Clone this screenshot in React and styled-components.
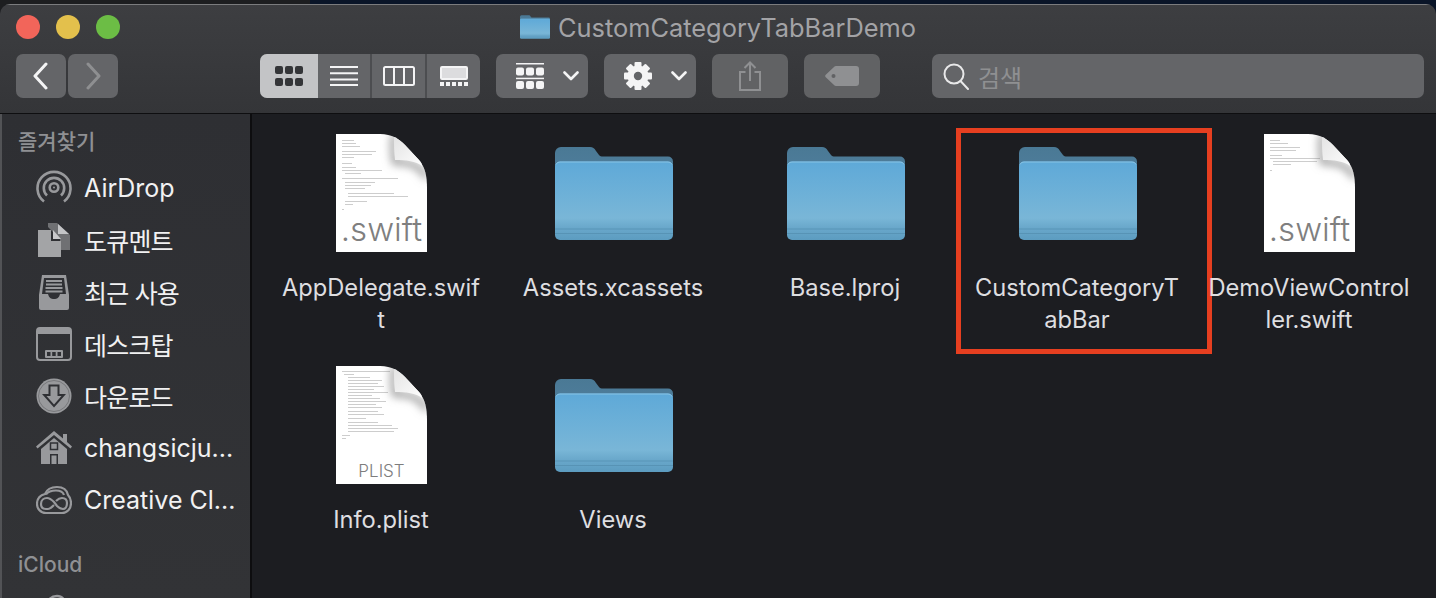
import React from "react";
import styled, { createGlobalStyle } from "styled-components";

const FONT = `Inter, "Noto Sans CJK KR", sans-serif`;

const GlobalStyle = createGlobalStyle`
  html, body {
    margin: 0;
    padding: 0;
    background: #1c1d21;
    font-family: ${FONT};
  }
`;

const Desktop = styled.div`
  width: 1436px;
  height: 598px;
  padding-top: 4px;
  box-sizing: border-box;
  overflow: hidden;
  background: linear-gradient(to right, #1d1e20 310px, #0a1528 310px);
`;

const Window = styled.div`
  height: 594px;
  display: flex;
  flex-direction: column;
  border-radius: 10px 10px 0 0;
  overflow: hidden;
  background: #1c1d21;
`;

const Toolbar = styled.header`
  flex: none;
  height: 110px;
  box-sizing: border-box;
  padding: 0 12px 0 16px;
  background: linear-gradient(#3d3e41, #343538);
  border-top: 1px solid #7b7c7e;
  border-bottom: 1px solid #0e0e10;
`;

const TitleRow = styled.div`
  height: 44px;
  margin: 0 4px 5px 0;
  display: grid;
  grid-template-columns: 1fr auto 1fr;
  align-items: center;
`;

const Lights = styled.div`
  display: flex;
  gap: 16px;
`;

const Light = styled.span`
  width: 24px;
  height: 24px;
  border-radius: 50%;
  background: ${(p) => p.$color};
`;

const Title = styled.div`
  display: flex;
  align-items: center;
  gap: 8px;
  font-size: 25.4px;
  color: #a3a3a6;
`;

const ToolRow = styled.div`
  display: flex;
  align-items: stretch;
  height: 44px;
`;

const NavGroup = styled.div`
  display: flex;
  gap: 2px;
  margin-right: 142px;
`;

const ToolButton = styled.div`
  width: ${(p) => p.$width}px;
  margin-right: ${(p) => p.$after || 0}px;
  box-sizing: border-box;
  padding-left: ${(p) => p.$inset || 0}px;
  display: flex;
  align-items: center;
  justify-content: ${(p) => (p.$inset ? "flex-start" : "center")};
  gap: ${(p) => p.$gap || 0}px;
  border-radius: 7px;
  background: ${(p) => (p.$dim ? "#616264" : "#646568")};
`;

const ViewGroup = styled.div`
  display: flex;
  margin-right: 16px;
  border-radius: 7px;
  overflow: hidden;
  background: #646568;
`;

const ViewCell = styled.div`
  width: ${(p) => p.$width}px;
  display: flex;
  align-items: center;
  justify-content: center;
  box-sizing: border-box;
  border-left: ${(p) => (p.$divided ? "2px solid #4c4d50" : "none")};
  background: ${(p) => (p.$active ? "#c3c4c6" : "transparent")};
`;

const SearchBox = styled.div`
  flex: 1;
  display: flex;
  align-items: center;
  gap: 9px;
  padding-left: 11px;
  margin-left: 52px;
  border-radius: 7px;
  background: #646568;
  color: #8f9092;
  font-size: 24px;
`;

const Body = styled.div`
  flex: 1;
  min-height: 0;
  display: flex;
`;

const Sidebar = styled.aside`
  flex: none;
  width: 252px;
  box-sizing: border-box;
  padding-top: 13px;
  overflow: hidden;
  background: linear-gradient(#2e2f33, #323336);
  border-left: 2px solid #525356;
  border-right: 2px solid #0d0d0f;
`;

const SectionLabel = styled.div`
  height: 30px;
  line-height: 30px;
  margin: ${(p) => p.$top || 0}px 0 5px 16px;
  font-size: 21px;
  font-weight: 500;
  color: #8f9093;
`;

const SideRow = styled.div`
  height: 52px;
  display: flex;
  align-items: center;
  padding-left: 34px;
  gap: 12px;
  color: #f1f1f2;
  font-size: 25px;
  letter-spacing: ${(p) => (p.$korean ? "-0.8px" : "0")};
  white-space: nowrap;
`;

const SideIcon = styled.svg`
  flex: none;
  width: 36px;
  height: 36px;
  color: #98999c;
`;

const Grid = styled.main`
  flex: 1;
  box-sizing: border-box;
  padding: 20px 0 0 13px;
  display: grid;
  grid-template-columns: repeat(5, 232px);
  grid-auto-rows: 232px;
`;

const Item = styled.div`
  position: relative;
  display: flex;
  flex-direction: column;
  align-items: center;
`;

const IconBox = styled.div`
  height: 118px;
  display: flex;
  align-items: center;
  justify-content: center;
  margin-bottom: 20px;
  padding-left: ${(p) => (p.$folder ? 2 : 0)}px;
`;

const Label = styled.div`
  font-size: 23.7px;
  line-height: 32px;
  color: #dedee0;
  text-align: center;
  white-space: nowrap;
`;

const SelectionFrame = styled.div`
  position: absolute;
  left: -5px;
  top: -6px;
  width: 256px;
  height: 226px;
  box-sizing: border-box;
  border: 5px solid #e63f20;
`;

const FolderIcon = ({ width = 118, height = 93 }) => (
  <svg width={width} height={height} viewBox="0 0 118 93">
    <defs>
      <linearGradient id="folderFront" x1="0" y1="0" x2="0" y2="1">
        <stop offset="0" stopColor="#5ea9d8" />
        <stop offset="0.72" stopColor="#79b6d7" />
        <stop offset="0.84" stopColor="#6aa8cb" />
        <stop offset="1" stopColor="#5c9cc0" />
      </linearGradient>
      <linearGradient id="folderBack" x1="0" y1="0" x2="0" y2="1">
        <stop offset="0" stopColor="#4a7995" />
        <stop offset="1" stopColor="#517f9e" />
      </linearGradient>
    </defs>
    <path
      d="M0 6a6 6 0 0 1 6-6h29c3 0 4 1 6 4l3 4c1 1 2 1.500 4 1.500h65a5 5 0 0 1 5 5V40H0Z"
      fill="url(#folderBack)"
    />
    <rect y="14.500" width="118" height="78.500" rx="5" fill="url(#folderFront)" />
    <path d="M1 17.500a4 4 0 0 1 4-2.500h108a4 4 0 0 1 4 2.500" fill="none" stroke="#88c3e4" />
    <path d="M0 82h118M0 86.500h118" stroke="#5590b2" strokeWidth="1" opacity="0.8" />
  </svg>
);

const CODE_LINES = {
  app: [
    [6, 6, 12], [6, 9, 14], [6, 12, 18], [6, 17, 34], [6, 20, 30], [6, 23, 12], [6, 29, 10], [6, 33, 14],
    [6, 36, 40], [9, 39, 16], [6, 44, 56], [9, 48, 30], [9, 51, 26], [9, 54, 20], [12, 59, 46],
    [12, 62, 60], [9, 67, 22], [9, 70, 8], [6, 75, 2],
  ],
  plist: [
    [6, 5, 48], [8, 8, 10], [12, 11, 22], [12, 14, 34], [12, 17, 30], [12, 20, 36], [12, 23, 26], [12, 26, 40],
    [12, 29, 24], [12, 32, 32], [12, 35, 38], [12, 38, 28], [12, 41, 34], [12, 45, 30], [12, 48, 36],
    [12, 52, 18], [12, 56, 30], [12, 59, 44], [12, 62, 50], [12, 65, 46], [6, 69, 8], [6, 72, 4],
  ],
  demo: [
    [6, 6, 10], [6, 9, 18], [6, 13, 30], [6, 16, 26], [6, 21, 12], [6, 24, 50], [9, 27, 44], [9, 30, 18],
    [6, 36, 2],
  ],
};

const PAGE_OUTLINE = "M0 0H44C56 0 63 5 69 11L83 26C89 33 91 42 91 54V118H0Z";

const FileIcon = ({ ext, lines, small }) => (
  <svg width="91" height="118" viewBox="0 0 91 118">
    <defs>
      <clipPath id="pageClip">
        <path d={PAGE_OUTLINE} />
      </clipPath>
      <filter id="curlBlur" x="-50%" y="-50%" width="200%" height="200%">
        <feGaussianBlur stdDeviation="4" />
      </filter>
      <linearGradient id="flapShade" x1="0" y1="0" x2="1" y2="1">
        <stop offset="0" stopColor="#e4e4e4" />
        <stop offset="1" stopColor="#fdfdfd" />
      </linearGradient>
    </defs>
    <path d={PAGE_OUTLINE} fill="#fff" />
    <g clipPath="url(#pageClip)">
      <path d="M58 0C57 12 57 20 59 28C68 28 82 28 91 44" fill="none" stroke="#9a9a9a" strokeWidth="6" filter="url(#curlBlur)" />
    </g>
    <path d="M58 3C61 4 65 7 69 11L83 26C85 28 86 30 86 32C80 27 70 26 59 26C58 18 58 10 58 3Z" fill="url(#flapShade)" />
    {lines.map(([x, y, w]) => (
      <rect key={`${x}-${y}`} x={x} y={y} width={w} height="0.600" fill="#777" opacity="0.6" />
    ))}
    {small ? (
      <text x="45.500" y="111" textAnchor="middle" fontFamily="Inter, sans-serif" fontWeight="300" fontSize="17" fill="#7d7d7d">
        {ext}
      </text>
    ) : (
      <text x="45.500" y="107" textAnchor="middle" fontFamily="Inter, sans-serif" fontWeight="300" fontSize="33" fill="#7f7f7f">
        {ext}
      </text>
    )}
  </svg>
);

const ITEMS = [
  { name: ["AppDelegate.swif", "t"], kind: "file", ext: ".swift", lines: CODE_LINES.app },
  { name: ["Assets.xcassets"], kind: "folder" },
  { name: ["Base.lproj"], kind: "folder" },
  { name: ["CustomCategoryT", "abBar"], kind: "folder", selected: true },
  { name: ["DemoViewControl", "ler.swift"], kind: "file", ext: ".swift", lines: CODE_LINES.demo },
  { name: ["Info.plist"], kind: "file", ext: "PLIST", small: true, lines: CODE_LINES.plist },
  { name: ["Views"], kind: "folder" },
];

const AirDropIcon = () => (
  <SideIcon viewBox="0 0 36 36" fill="none" stroke="currentColor" strokeWidth="2.600">
    <path d="M8 31.500A16.500 16.500 0 1 1 28 31.500" />
    <path d="M11 25.500A10.200 10.200 0 1 1 25 25.500" />
    <circle cx="18" cy="17.500" r="4.300" />
    <circle cx="18" cy="17.500" r="1" fill="currentColor" stroke="none" />
  </SideIcon>
);

const DocumentsIcon = () => (
  <SideIcon viewBox="0 0 36 36">
    <path d="M12 1h9l13 12v15H24V17L12 5Z" fill="#6f7073" />
    <path d="M2 8h13v11h10v16H2Z" fill="#a3a4a6" />
    <path d="M17 8l8 9h-8Z" fill="#c9c9cb" />
    <path d="M22 2l11 10H22Z" fill="#c3c4c6" />
  </SideIcon>
);

const RecentsIcon = () => (
  <SideIcon viewBox="0 0 36 36">
    <path d="M6 1h24l3 20v13a2 2 0 0 1-2 2H5a2 2 0 0 1-2-2V21Z" fill="#98999c" />
    <path d="M8 4h20l2 16h-6c-1 4-3 5-6 5s-5-1-6-5H6Z" fill="#2f3034" />
    <path d="M10 7h16M10 10.500h16M9.500 14h17M9.500 17.500h17" stroke="#98999c" strokeWidth="2" />
  </SideIcon>
);

const DesktopIcon = () => (
  <SideIcon viewBox="0 0 36 36" fill="none">
    <rect x="1" y="2" width="34" height="32" rx="3" stroke="currentColor" strokeWidth="2" />
    <rect x="2" y="3" width="32" height="5" fill="currentColor" />
    <rect x="9" y="24" width="18" height="8" rx="1" fill="currentColor" />
    <rect x="11" y="26" width="3.500" height="4" fill="#2f3034" />
    <rect x="16.200" y="26" width="3.500" height="4" fill="#2f3034" />
    <rect x="21.500" y="26" width="3.500" height="4" fill="#2f3034" />
  </SideIcon>
);

const DownloadsIcon = () => (
  <SideIcon viewBox="0 0 36 36">
    <circle cx="18" cy="18" r="17.500" fill="#98999c" />
    <circle cx="18" cy="18" r="15.500" fill="none" stroke="#77787b" strokeWidth="1" />
    <path d="M12.500 6.500h11V16h6.500L18 29.500 6 16h6.500Z" fill="#2f3034" />
    <path d="M14.500 8.500h7V18h4L18 26.500 10.500 18h4Z" fill="#98999c" />
  </SideIcon>
);

const HomeIcon = () => (
  <SideIcon viewBox="0 0 36 36">
    <path d="M18 1 27 8.500V4h4v8l5 4.500-1.500 2L18 5 1.500 18.500 0 16.500Z" fill="currentColor" />
    <path d="M18 8 31 19V34H5V19Z" fill="currentColor" />
    <rect x="14.500" y="13" width="7" height="6.500" fill="none" stroke="#2f3034" strokeWidth="1.500" />
    <rect x="14" y="24" width="8" height="10" fill="#2f3034" />
    <rect x="15.500" y="25.500" width="5" height="8.500" fill="currentColor" />
  </SideIcon>
);

const CreativeCloudIcon = () => (
  <SideIcon viewBox="0 0 36 36" fill="none" stroke="currentColor" strokeWidth="2.200">
    <path d="M10 31C4 31 1 26 1 22 1 16 5 13 9 12 11 7 16 5 21 5 27 5 31 8 32 13 34 15 35 18 35 21 35 27 31 31 26 31Z" />
    <path d="M10 27C7 27 5 25 5 22 5 18 8 16 11 16 14 16 16 18 18 20L21 24C23 26 25 27 27 27 29 27 31 25 31 21 31 18 29 16 26 16 24 16 22 17 20 19" />
    <path d="M10 12.500C12 9.500 16 8.500 20 8.500 24 8.500 27 10 28 13M10 27H12C14 27 16 25 18 23" />
  </SideIcon>
);

const CloudDriveIcon = () => (
  <SideIcon viewBox="0 0 36 36">
    <path d="M6 34C2 34 0 30 0 27 0 23 3 20 7 20 8 10 14 3 21 3 27 3 31 9 31 16 34 18 36 22 36 26 36 30 33 34 29 34Z" fill="none" stroke="currentColor" strokeWidth="2.400" />
  </SideIcon>
);

const SIDE_ITEMS = [
  { label: "AirDrop", Icon: AirDropIcon },
  { label: "도큐멘트", Icon: DocumentsIcon, korean: true },
  { label: "최근 사용", Icon: RecentsIcon, korean: true },
  { label: "데스크탑", Icon: DesktopIcon, korean: true },
  { label: "다운로드", Icon: DownloadsIcon, korean: true },
  { label: "changsicju...", Icon: HomeIcon },
  { label: "Creative Cl...", Icon: CreativeCloudIcon },
];

const Chevron = ({ dir, color }) => (
  <svg width="18" height="28" viewBox="0 0 18 28" fill="none" stroke={color} strokeWidth="3" strokeLinecap="round" strokeLinejoin="round">
    <path d={dir === "left" ? "M14 2 3 14l11 12" : "M4 2l11 12L4 26"} />
  </svg>
);

const SmallChevron = () => (
  <svg width="16" height="10" viewBox="0 0 16 10" fill="none" stroke="#f4f4f5" strokeWidth="2.600" strokeLinecap="round" strokeLinejoin="round">
    <path d="M1.500 1.500 8 8l6.500-6.500" />
  </svg>
);

const GridViewIcon = () => (
  <svg width="28" height="20" viewBox="0 0 28 20" fill="#343538">
    {[0, 10, 20].flatMap((x) =>
      [0, 12].map((y) => <rect key={`${x}-${y}`} x={x} y={y} width="8" height="8" rx="2" />)
    )}
  </svg>
);

const ListViewIcon = () => (
  <svg width="28" height="20" viewBox="0 0 28 20" stroke="#f4f4f5" strokeWidth="2">
    <path d="M0 1h28M0 7.300h28M0 13.600h28M0 19h28" />
  </svg>
);

const ColumnViewIcon = () => (
  <svg width="32" height="20" viewBox="0 0 32 20" fill="none" stroke="#f4f4f5" strokeWidth="2">
    <rect x="1" y="1" width="30" height="18" rx="1.500" />
    <path d="M11 1v18M21 1v18" />
  </svg>
);

const GalleryViewIcon = () => (
  <svg width="28" height="20" viewBox="0 0 28 20">
    <rect x="1" y="1" width="26" height="12" rx="1" fill="#dcdcde" stroke="#f4f4f5" strokeWidth="2" />
    {[0, 6, 12, 18, 24].map((x) => (
      <rect key={x} x={x} y="16" width="4" height="4" fill="#f4f4f5" />
    ))}
  </svg>
);

const ArrangeIcon = () => (
  <svg width="28" height="26" viewBox="0 0 28 26" fill="#f4f4f5">
    <rect width="28" height="1.500" />
    {[0, 10, 20].map((x) => (
      <React.Fragment key={x}>
        <rect x={x} y="4.500" width="8" height="8" rx="2" />
        <rect x={x} y="18" width="8" height="8" rx="2" />
      </React.Fragment>
    ))}
    <rect y="14.700" width="28" height="1.500" />
  </svg>
);

const GearIcon = () => (
  <svg width="28" height="28" viewBox="0 0 28 28">
    <g fill="#f4f4f5">
      {[0, 45, 90, 135, 180, 225, 270, 315].map((a) => (
        <rect key={a} x="10.500" y="0" width="7" height="8" rx="1" transform={`rotate(${a} 14 14)`} />
      ))}
      <circle cx="14" cy="14" r="10.500" />
    </g>
    <circle cx="14" cy="14" r="4.200" fill="#646568" />
  </svg>
);

const ShareIcon = () => (
  <svg width="24" height="30" viewBox="0 0 24 30" fill="none" stroke="#8f9092" strokeWidth="2">
    <path d="M7.500 11H2v18h20V11h-5.500" />
    <path d="M12 20V2M6.500 7 12 1.500 17.500 7" />
  </svg>
);

const TagIcon = () => (
  <svg width="34" height="20" viewBox="0 0 34 20">
    <path d="M11 0h20a3 3 0 0 1 3 3v14a3 3 0 0 1-3 3H11a3 3 0 0 1-2-1L1 11.500a2 2 0 0 1 0-3L9 1a3 3 0 0 1 2-1Z" fill="#8f9092" />
    <circle cx="8.500" cy="10" r="2" fill="#616264" />
  </svg>
);

const SearchIcon = () => (
  <svg width="26" height="28" viewBox="0 0 26 28" fill="none" stroke="#e8e8e9" strokeWidth="2">
    <circle cx="11" cy="12" r="9.500" />
    <path d="M17.500 19 25 27" strokeLinecap="round" />
  </svg>
);

const App = () => (
  <Desktop>
    <GlobalStyle />
    <Window>
      <Toolbar>
        <TitleRow>
          <Lights>
            <Light $color="#f2655a" />
            <Light $color="#e3c04c" />
            <Light $color="#6cbd45" />
          </Lights>
          <Title>
            <FolderIcon width={30} height={24} />
            CustomCategoryTabBarDemo
          </Title>
        </TitleRow>
        <ToolRow>
          <NavGroup>
            <ToolButton $width={50}>
              <Chevron dir="left" color="#f4f4f5" />
            </ToolButton>
            <ToolButton $width={50}>
              <Chevron dir="right" color="#8e8f91" />
            </ToolButton>
          </NavGroup>
          <ViewGroup>
            <ViewCell $width={58} $active>
              <GridViewIcon />
            </ViewCell>
            <ViewCell $width={52}>
              <ListViewIcon />
            </ViewCell>
            <ViewCell $width={55} $divided>
              <ColumnViewIcon />
            </ViewCell>
            <ViewCell $width={55} $divided>
              <GalleryViewIcon />
            </ViewCell>
          </ViewGroup>
          <ToolButton $width={92} $after={16} $inset={20} $gap={19}>
            <ArrangeIcon />
            <SmallChevron />
          </ToolButton>
          <ToolButton $width={92} $after={16} $inset={20} $gap={19}>
            <GearIcon />
            <SmallChevron />
          </ToolButton>
          <ToolButton $width={76} $after={16} $dim>
            <ShareIcon />
          </ToolButton>
          <ToolButton $width={76} $dim>
            <TagIcon />
          </ToolButton>
          <SearchBox>
            <SearchIcon />
            검색
          </SearchBox>
        </ToolRow>
      </Toolbar>
      <Body>
        <Sidebar>
          <SectionLabel>즐겨찾기</SectionLabel>
          {SIDE_ITEMS.map(({ label, Icon, korean }) => (
            <SideRow key={label} $korean={korean}>
              <Icon />
              {label}
            </SideRow>
          ))}
          <SectionLabel $top={24}>iCloud</SectionLabel>
          <SideRow>
            <CloudDriveIcon />
          </SideRow>
        </Sidebar>
        <Grid>
          {ITEMS.map((item) => (
            <Item key={item.name.join("")}>
              <IconBox $folder={item.kind === "folder"}>
                {item.kind === "folder" ? (
                  <FolderIcon />
                ) : (
                  <FileIcon ext={item.ext} lines={item.lines} small={item.small} />
                )}
              </IconBox>
              <Label>
                {item.name.map((line) => (
                  <div key={line}>{line}</div>
                ))}
              </Label>
              {item.selected && <SelectionFrame />}
            </Item>
          ))}
        </Grid>
      </Body>
    </Window>
  </Desktop>
);

export default App;
